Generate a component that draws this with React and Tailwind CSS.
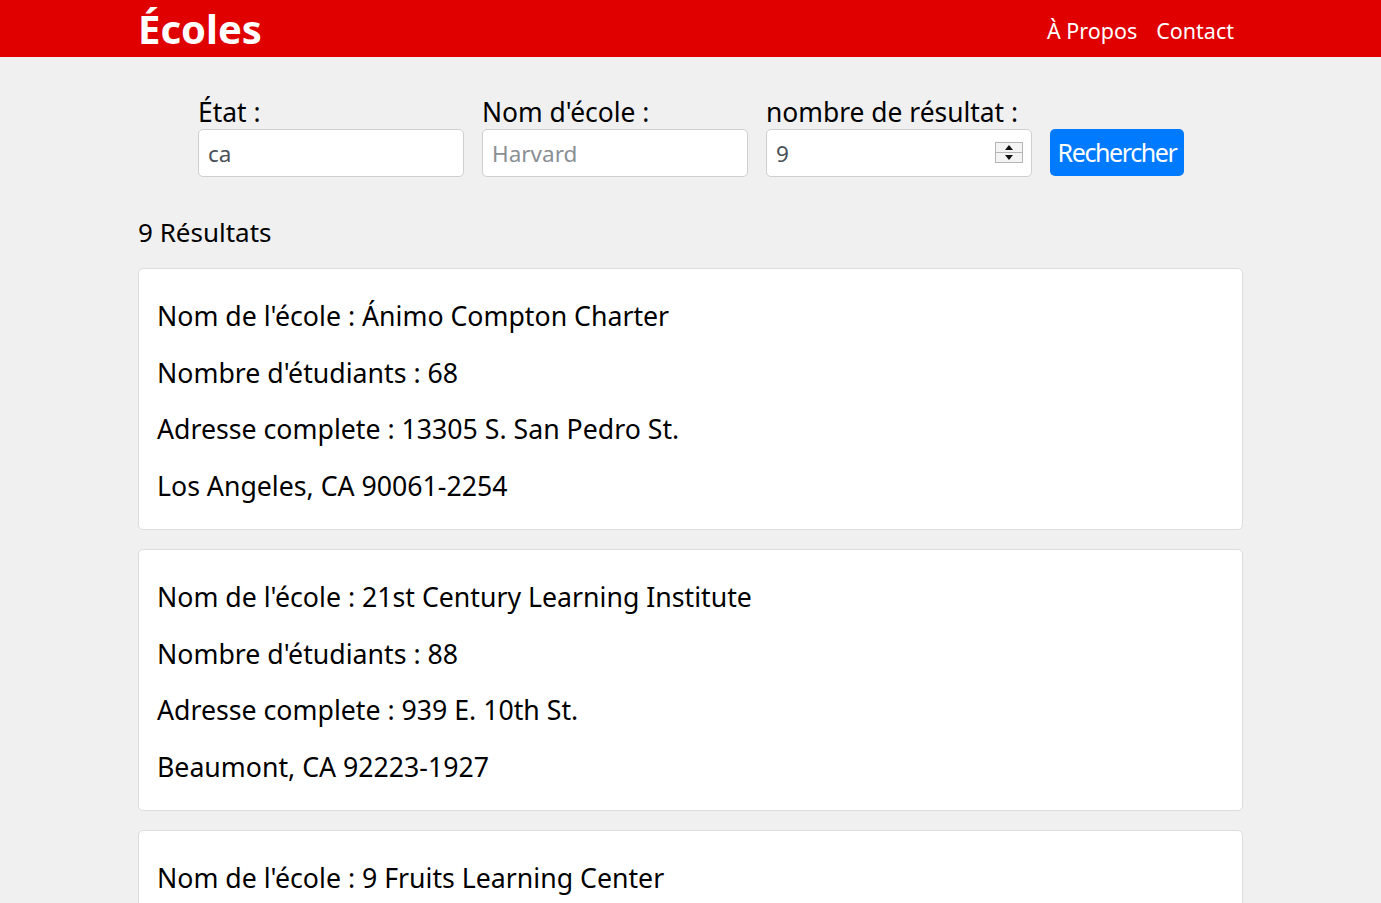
import React from 'react';

const font = { fontFamily: '"Noto Sans", "Open Sans", sans-serif' };

const schools = [
  {
    name: 'Ánimo Compton Charter',
    students: 68,
    street: '13305 S. San Pedro St.',
    city: 'Los Angeles, CA 90061-2254',
  },
  {
    name: '21st Century Learning Institute',
    students: 88,
    street: '939 E. 10th St.',
    city: 'Beaumont, CA 92223-1927',
  },
  {
    name: '9 Fruits Learning Center',
    students: 40,
    street: '1200 W. Main St.',
    city: 'Fresno, CA 93701-1111',
  },
];

const Field = ({ label, children }) => (
  <div className="flex flex-col w-[266px]">
    <label className="text-[26.4px] leading-[34px] text-black">{label}</label>
    {children}
  </div>
);

const inputClasses =
  'h-[48px] w-full rounded-[5px] border border-[#cfcfcf] bg-white px-[9px] text-[22.5px] text-[#495057] outline-none placeholder:text-[#8a8f94]';

const SchoolCard = ({ school }) => (
  <div className="rounded-[5px] border border-[#dcdcdc] bg-white px-[18px] pt-[28px] pb-[14px] text-[26.7px] leading-[38px]">
    <p className="mb-[19px]">Nom de l'école : {school.name}</p>
    <p className="mb-[18px]">Nombre d'étudiants : {school.students}</p>
    <p className="mb-[19px]">Adresse complete : {school.street}</p>
    <p className="mb-[10px]">{school.city}</p>
  </div>
);

export default function App() {
  return (
    <div className="min-h-[903px] bg-[#f0f0f0] text-black" style={font}>
      <header className="h-[57px] bg-[#e00000]">
        <div className="mx-auto flex h-full w-[1105px] items-center justify-between">
          <h1 className="text-[40px] font-bold leading-none text-white">Écoles</h1>
          <nav className="mr-[9px] mt-[6px] flex gap-[19px] text-[21.5px] text-white">
            <a>À Propos</a>
            <a>Contact</a>
          </nav>
        </div>
      </header>

      <main className="mx-auto w-[1105px]">
        <form className="flex items-end gap-[18px] pl-[60px] pt-[38px]">
          <Field label="État :">
            <input className={inputClasses} defaultValue="ca" style={font} />
          </Field>
          <Field label="Nom d'école :">
            <input className={inputClasses} placeholder="Harvard" style={font} />
          </Field>
          <Field label="nombre de résultat :">
            <div className="relative">
              <input className={inputClasses} defaultValue="9" style={font} />
              <div className="absolute right-[9px] top-[13px] flex h-[21px] w-[28px] flex-col border border-[#b5b5b5] bg-[#f4f4f4]">
                <div className="flex flex-1 items-center justify-center border-b border-[#b5b5b5]">
                  <svg width="8" height="5" viewBox="0 0 8 5"><path d="M0 5 L4 0 L8 5 Z" fill="#111" /></svg>
                </div>
                <div className="flex flex-1 items-center justify-center">
                  <svg width="8" height="5" viewBox="0 0 8 5"><path d="M0 0 L8 0 L4 5 Z" fill="#111" /></svg>
                </div>
              </div>
            </div>
          </Field>
          <button
            type="button"
            className="mb-[1px] h-[47px] w-[134px] rounded-[5px] bg-[#007bff] text-[25px] tracking-[-1.4px] text-white"
            style={font}
          >
            Rechercher
          </button>
        </form>

        <h2 className="mt-[36px] mb-[17px] text-[26px] leading-[38px]">9 Résultats</h2>

        <div className="flex flex-col gap-[19px]">
          {schools.map((s) => (
            <SchoolCard key={s.name} school={s} />
          ))}
        </div>
      </main>
    </div>
  );
}
